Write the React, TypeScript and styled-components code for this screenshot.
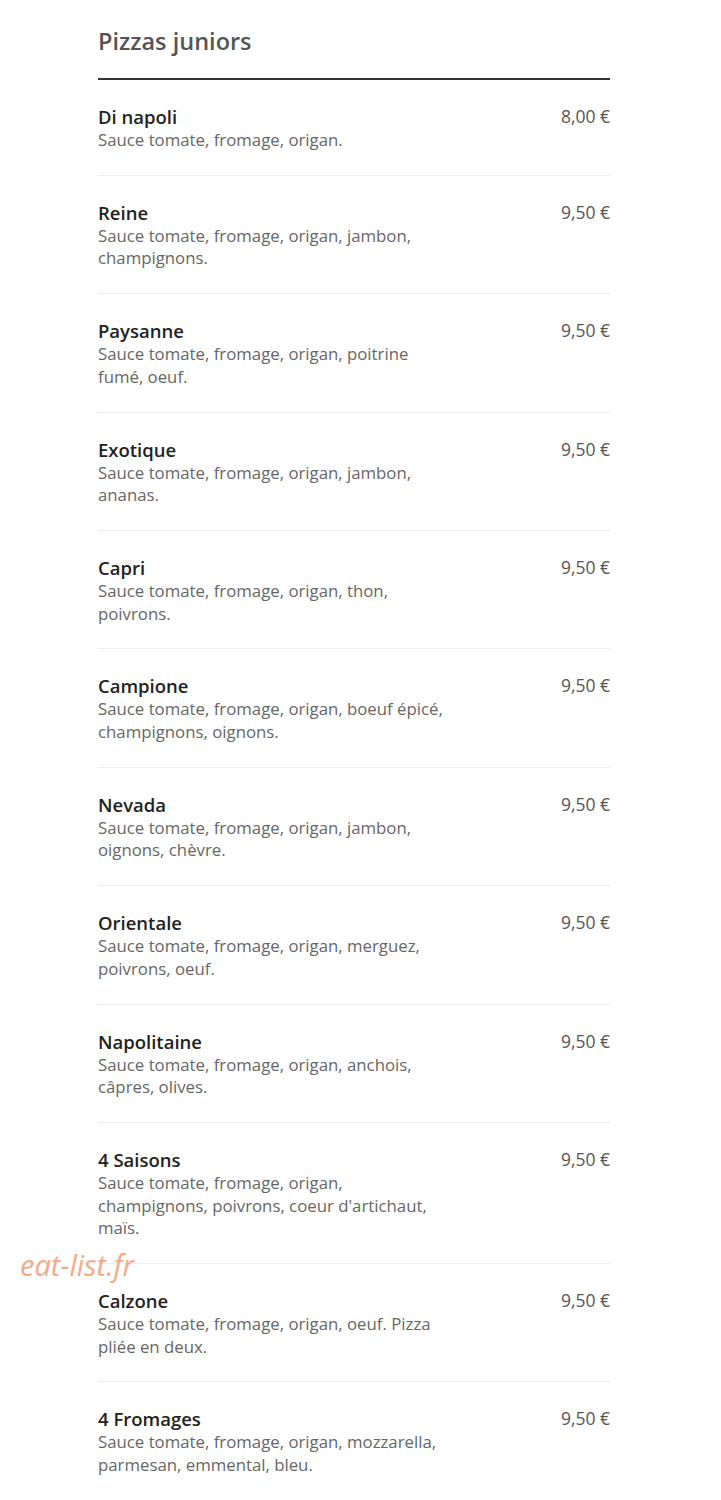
import React from "react";
import styled, { createGlobalStyle } from "styled-components";

const GlobalStyle = createGlobalStyle`
  body {
    margin: 0;
    background: #fff;
    font-family: "Open Sans", "Liberation Sans", sans-serif;
  }
`;

const Page = styled.main`
  position: relative;
  padding: 24px 111px 40px 98px;
`;

const Title = styled.h2`
  margin: 0;
  font-size: 23.5px;
  font-weight: 600;
  line-height: 34px;
  color: #555;
  padding-bottom: 20px;
  border-bottom: 2px solid #333;
`;

const List = styled.ul`
  list-style: none;
  margin: 0;
  padding: 0;
`;

const Row = styled.li`
  display: flex;
  justify-content: space-between;
  align-items: flex-start;
  padding: 24px 0 23px;
  border-bottom: 1px solid #eee;
  &:last-child {
    border-bottom: none;
  }
`;

const Info = styled.div`
  width: 356px;
`;

const Name = styled.div`
  font-size: 18.5px;
  font-weight: 600;
  line-height: 25px;
  color: #222;
`;

const Desc = styled.div`
  font-size: 16.8px;
  line-height: 22.7px;
  color: #666;
`;

const Price = styled.div`
  font-size: 17.5px;
  line-height: 25px;
  color: #555;
  white-space: nowrap;
`;

const Watermark = styled.span`
  position: absolute;
  left: 20px;
  top: 1245px;
  font-size: 29px;
  font-style: italic;
  color: #f4a07a;
  opacity: 0.9;
`;

const items = [
  ["Di napoli", "Sauce tomate, fromage, origan.", "8,00 €"],
  ["Reine", "Sauce tomate, fromage, origan, jambon, champignons.", "9,50 €"],
  ["Paysanne", "Sauce tomate, fromage, origan, poitrine fumé, oeuf.", "9,50 €"],
  ["Exotique", "Sauce tomate, fromage, origan, jambon, ananas.", "9,50 €"],
  ["Capri", "Sauce tomate, fromage, origan, thon, poivrons.", "9,50 €"],
  ["Campione", "Sauce tomate, fromage, origan, boeuf épicé, champignons, oignons.", "9,50 €"],
  ["Nevada", "Sauce tomate, fromage, origan, jambon, oignons, chèvre.", "9,50 €"],
  ["Orientale", "Sauce tomate, fromage, origan, merguez, poivrons, oeuf.", "9,50 €"],
  ["Napolitaine", "Sauce tomate, fromage, origan, anchois, câpres, olives.", "9,50 €"],
  ["4 Saisons", "Sauce tomate, fromage, origan, champignons, poivrons, coeur d'artichaut, maïs.", "9,50 €"],
  ["Calzone", "Sauce tomate, fromage, origan, oeuf. Pizza pliée en deux.", "9,50 €"],
  ["4 Fromages", "Sauce tomate, fromage, origan, mozzarella, parmesan, emmental, bleu.", "9,50 €"],
];

export default function App() {
  return (
    <Page>
      <GlobalStyle />
      <Title>Pizzas juniors</Title>
      <List>
        {items.map(([name, desc, price]) => (
          <Row key={name}>
            <Info>
              <Name>{name}</Name>
              <Desc>{desc}</Desc>
            </Info>
            <Price>{price}</Price>
          </Row>
        ))}
      </List>
      <Watermark>eat-list.fr</Watermark>
    </Page>
  );
}
